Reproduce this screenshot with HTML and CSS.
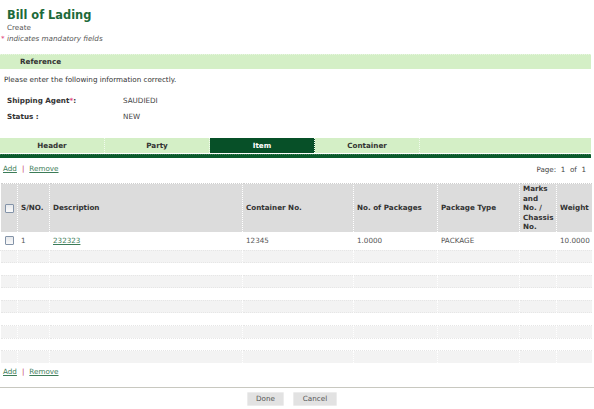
FILE: index.html
```html
<!DOCTYPE html>
<html lang="en">
<head>
<meta charset="utf-8">
<title>Bill of Lading - Create</title>
<link rel="stylesheet" href="styles.css">
</head>
<body>
<div class="page">
  <header class="page-head">
    <h1 class="title">Bill of Lading</h1>
    <div class="subtitle">Create</div>
    <div class="mandatory"><span class="req">*</span> indicates mandatory fields</div>
  </header>

  <div class="section-bar">Reference</div>
  <p class="hint">Please enter the following information correctly.</p>

  <div class="info">
    <div class="info-row"><span class="info-label">Shipping Agent<span class="req">*</span>:</span><span class="info-value">SAUDIEDI</span></div>
    <div class="info-row"><span class="info-label">Status :</span><span class="info-value">NEW</span></div>
  </div>

  <nav class="tabs">
    <a class="tab">Header</a>
    <a class="tab">Party</a>
    <a class="tab active">Item</a>
    <a class="tab">Container</a>
    <span class="tab-fill"></span>
  </nav>
  <div class="tab-rule"></div>

  <div class="toolbar">
    <div class="actions"><a href="#" class="link">Add</a><span class="sep">|</span><a href="#" class="link">Remove</a></div>
    <div class="pager">Page:&nbsp; 1 &nbsp;of&nbsp; 1</div>
  </div>

  <table class="grid">
    <colgroup>
      <col style="width:17px"><col style="width:32px"><col style="width:193px"><col style="width:111px">
      <col style="width:84px"><col style="width:82px"><col style="width:37px"><col style="width:35px">
    </colgroup>
    <thead>
      <tr>
        <th class="cb-cell"><span class="cb"></span></th>
        <th>S/NO.</th>
        <th>Description</th>
        <th>Container No.</th>
        <th>No. of Packages</th>
        <th>Package Type</th>
        <th>Marks and No. / Chassis No.</th>
        <th>Weight</th>
      </tr>
    </thead>
    <tbody>
      <tr class="data">
        <td class="cb-cell"><span class="cb"></span></td>
        <td>1</td>
        <td><a href="#" class="link">232323</a></td>
        <td>12345</td>
        <td>1.0000</td>
        <td>PACKAGE</td>
        <td></td>
        <td>10.0000</td>
      </tr>
      <tr class="blank shade"><td></td><td></td><td></td><td></td><td></td><td></td><td></td><td></td></tr>
      <tr class="blank"><td></td><td></td><td></td><td></td><td></td><td></td><td></td><td></td></tr>
      <tr class="blank shade"><td></td><td></td><td></td><td></td><td></td><td></td><td></td><td></td></tr>
      <tr class="blank"><td></td><td></td><td></td><td></td><td></td><td></td><td></td><td></td></tr>
      <tr class="blank shade"><td></td><td></td><td></td><td></td><td></td><td></td><td></td><td></td></tr>
      <tr class="blank"><td></td><td></td><td></td><td></td><td></td><td></td><td></td><td></td></tr>
      <tr class="blank shade"><td></td><td></td><td></td><td></td><td></td><td></td><td></td><td></td></tr>
      <tr class="blank"><td></td><td></td><td></td><td></td><td></td><td></td><td></td><td></td></tr>
      <tr class="blank shade"><td></td><td></td><td></td><td></td><td></td><td></td><td></td><td></td></tr>
    </tbody>
  </table>

  <div class="toolbar bottom">
    <div class="actions"><a href="#" class="link">Add</a><span class="sep">|</span><a href="#" class="link">Remove</a></div>
  </div>

  <footer class="buttons">
    <button class="btn">Done</button>
    <button class="btn">Cancel</button>
  </footer>
</div>
</body>
</html>
```

FILE: styles.css
```css
html, body {
  margin: 0;
  padding: 0;
  background: #fff;
}

body {
  font-family: "DejaVu Sans", Verdana, sans-serif;
  font-size: 7.2px;
  color: #333;
}

.page {
  width: 591px;
}

/* page heading */
.page-head {
  padding: 8px 0 0 7px;
}

.title {
  margin: 0;
  font-size: 11.4px;
  line-height: 14px;
  font-weight: bold;
  color: #1d6a3a;
}

.subtitle {
  line-height: 10px;
  margin-top: 1px;
  color: #555;
}

.mandatory {
  line-height: 10px;
  margin-top: 1px;
  font-style: italic;
  color: #555;
  margin-left: -6px;
}

.req {
  color: #e0407a;
}

/* reference section */
.section-bar {
  margin-top: 10px;
  height: 14px;
  line-height: 14px;
  padding-left: 20px;
  background: #d4efc6;
  border-top: 1px dotted #e8f6e2;
  font-weight: bold;
  color: #333;
}

.hint {
  margin: 6px 0 0 4px;
  line-height: 10px;
}

.info {
  margin-top: 10px;
  padding-left: 7px;
}

.info-row {
  display: flex;
  height: 16px;
  line-height: 12px;
}

.info-label {
  width: 116px;
  font-weight: bold;
}

.info-value {
  color: #444;
}

/* tab strip */
.tabs {
  display: flex;
  margin-top: 11px;
  height: 15px;
  background: #d4efc6;
}

.tab {
  width: 104px;
  border-right: 1px dotted #f2fbee;
  text-align: center;
  line-height: 15px;
  font-weight: bold;
  color: #333;
}

.tab.active {
  background: #075028;
  color: #fff;
}

.tab-fill {
  flex: 1;
}

.tab-rule {
  margin-top: 1px;
  height: 4px;
  background: #0a5a2c;
  border-top: 1px dotted #3f7f55;
  box-sizing: border-box;
}

/* add / remove line */
.toolbar {
  display: flex;
  justify-content: space-between;
  align-items: flex-end;
  margin-top: 5px;
  padding: 0 5px 0 3px;
  height: 12px;
}

.toolbar.bottom {
  margin-top: 3px;
}

.actions {
  line-height: 12px;
}

.link {
  color: #3c7c58;
  text-decoration: underline;
}

.sep {
  color: #c03060;
  margin: 0 5px;
}

.pager {
  line-height: 10px;
  color: #444;
}

/* items grid */
.grid {
  margin-top: 8px;
  width: 591px;
  table-layout: fixed;
  border-collapse: collapse;
  border-top: 1px dotted #cfcfcf;
}

.grid th,
.grid td {
  padding: 0 0 0 3px;
  text-align: left;
  vertical-align: middle;
  border-left: 1px dotted #fff;
}

.grid th {
  height: 48px;
  padding-right: 3px;
  background: #dcdcdc;
  font-weight: bold;
  line-height: 9.4px;
  color: #333;
}

.grid .cb-cell {
  padding: 0 0 0 4px;
  border-left: 0;
}

.grid th.cb-cell {
  padding: 0 0 0 4px;
}

.grid tr.data td {
  height: 18px;
  color: #555;
  vertical-align: top;
  padding-top: 4px;
  box-sizing: border-box;
}

.grid tr.blank td {
  height: 11.6px;
  padding: 0;
  border-top: 1px dotted #e6e6e6;
}

.grid tr.blank.shade td {
  background: #f3f3f3;
}

.cb {
  display: block;
  width: 7px;
  height: 7px;
  border: 1px solid #8393a8;
  background: linear-gradient(#e6e8ec, #fafafa);
  border-radius: 1px;
}

/* bottom buttons */
.buttons {
  margin-top: 9px;
  border-top: 1px solid #c8c8c0;
  width: 594px;
  display: flex;
  justify-content: center;
  gap: 9px;
  padding: 4px 10px 0 0;
  box-sizing: border-box;
}

.btn {
  font-family: "DejaVu Sans", Verdana, sans-serif;
  font-size: 7.2px;
  color: #555;
  background: #e2e2e2;
  border: 1px solid #ececec;
  height: 14px;
  width: 37px;
  padding: 0;
  border-radius: 1px;
}

.btn + .btn {
  width: 44px;
}
```
